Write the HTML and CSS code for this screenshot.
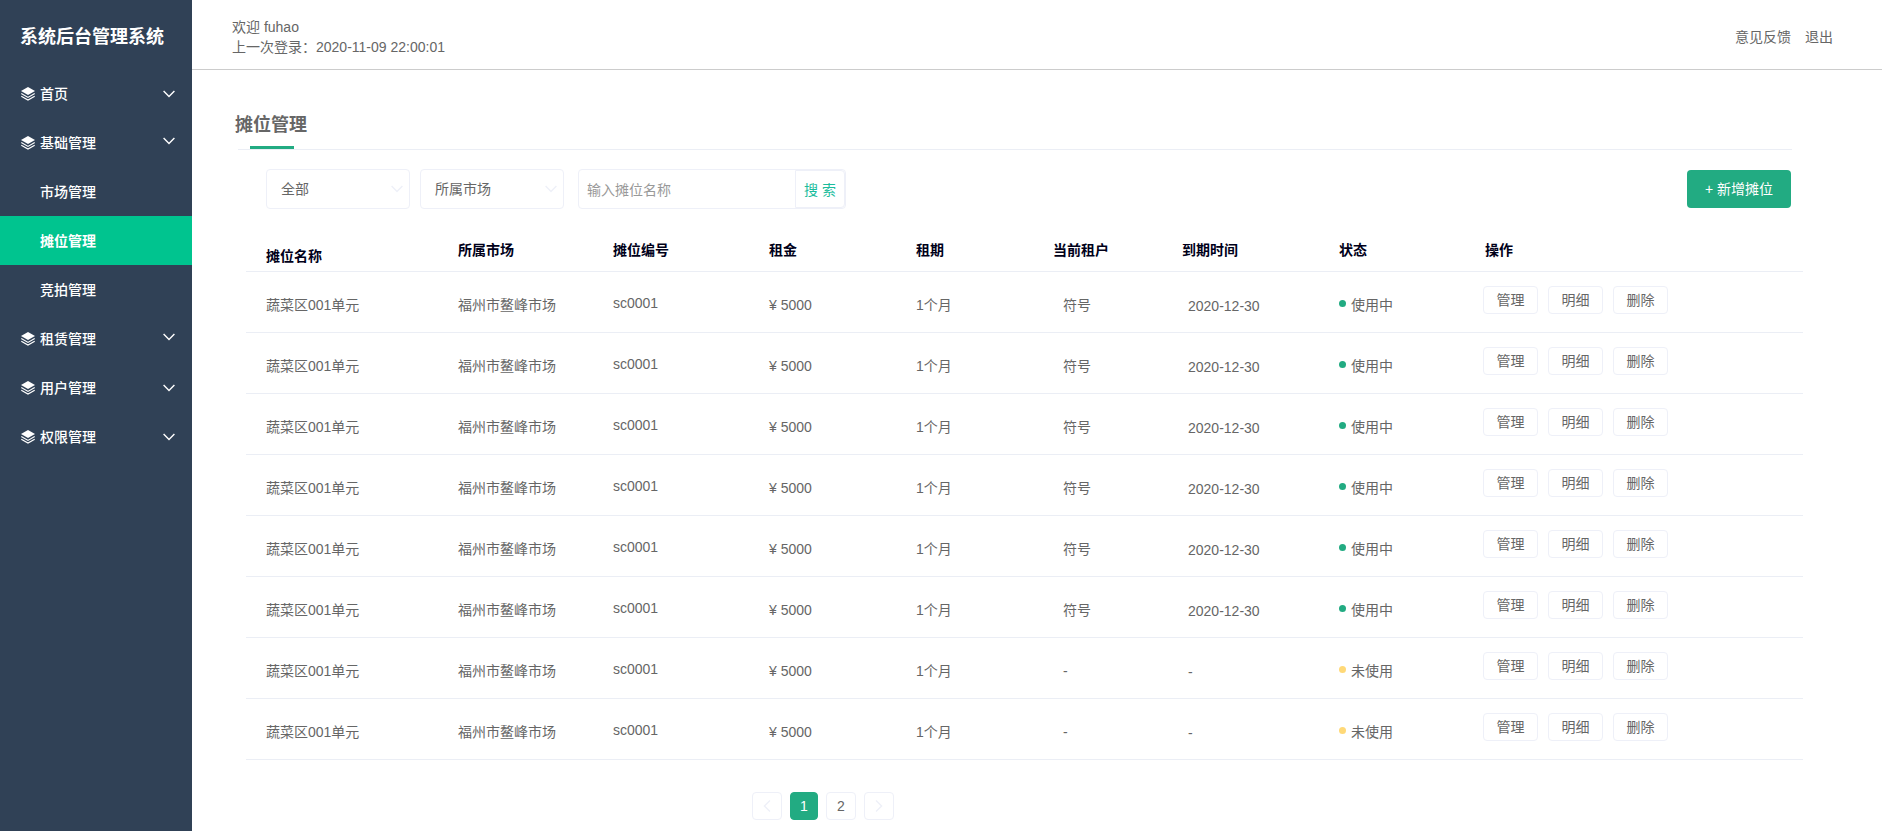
FILE: index.html
```html
<!DOCTYPE html>
<html lang="zh-CN">
<head>
<meta charset="utf-8">
<title>摊位管理</title>
<link rel="stylesheet" href="styles.css">
</head>
<body>
<svg class="sprite" aria-hidden="true">
  <symbol id="layers" viewBox="0 0 14 14">
    <path class="fill" d="M7 0 14 4 7 8 0 4Z"/>
    <path class="line thin" d="M0.3 6.6 7 10.4 13.7 6.6M0.3 9.3 7 13.1 13.7 9.3"/>
  </symbol>
  <symbol id="chevron" viewBox="0 0 12 8">
    <path class="line" d="M0.6 1 6 6.6 11.4 1"/>
  </symbol>
</svg>
<div class="app">
  <aside class="sidebar">
    <h1 class="brand">系统后台管理系统</h1>
    <nav class="menu">
      <a class="menu-item" href="#"><svg class="layers"><use href="#layers"/></svg>首页<svg class="chevron"><use href="#chevron"/></svg></a>
      <a class="menu-item" href="#"><svg class="layers"><use href="#layers"/></svg>基础管理<svg class="chevron raised"><use href="#chevron"/></svg></a>
      <a class="menu-item sub" href="#">市场管理</a>
      <a class="menu-item sub active" href="#">摊位管理</a>
      <a class="menu-item sub" href="#">竞拍管理</a>
      <a class="menu-item" href="#"><svg class="layers"><use href="#layers"/></svg>租赁管理<svg class="chevron raised"><use href="#chevron"/></svg></a>
      <a class="menu-item" href="#"><svg class="layers"><use href="#layers"/></svg>用户管理<svg class="chevron"><use href="#chevron"/></svg></a>
      <a class="menu-item" href="#"><svg class="layers"><use href="#layers"/></svg>权限管理<svg class="chevron"><use href="#chevron"/></svg></a>
    </nav>
  </aside>
  <div class="page">
    <header class="topbar">
      <p class="welcome">欢迎 fuhao<br>上一次登录：2020-11-09 22:00:01</p>
      <div class="links"><a href="#">意见反馈</a><a href="#">退出</a></div>
    </header>
    <main class="content">
      <div class="heading"><h2>摊位管理</h2><div class="tabline"></div></div>
      <form class="filters">
        <div class="picker"><select aria-label="状态"><option>全部</option></select><svg class="chevron"><use href="#chevron"/></svg></div>
        <div class="picker"><select aria-label="所属市场"><option>所属市场</option></select><svg class="chevron"><use href="#chevron"/></svg></div>
        <div class="search"><input type="text" aria-label="摊位名称" placeholder="输入摊位名称"><button type="button">搜 索</button></div>
        <button class="add" type="button">+ 新增摊位</button>
      </form>
      <table class="stalls">
        <colgroup><col class="w-name"><col class="w-market"><col class="w-code"><col class="w-rent"><col class="w-term"><col class="w-tenant"><col class="w-date"><col class="w-state"><col></colgroup>
        <thead><tr><th class="name">摊位名称</th><th>所属市场</th><th>摊位编号</th><th>租金</th><th>租期</th><th>当前租户</th><th>到期时间</th><th>状态</th><th class="ops">操作</th></tr></thead>
        <tbody id="rows"></tbody>
      </table>
      <nav class="pages" aria-label="分页">
        <button type="button" aria-label="上一页"><svg class="prev"><use href="#chevron"/></svg></button>
        <button type="button" class="current">1</button>
        <button type="button">2</button>
        <button type="button" aria-label="下一页"><svg class="next"><use href="#chevron"/></svg></button>
      </nav>
    </main>
  </div>
</div>
<script src="app.js"></script>
</body>
</html>
```
FILE: styles.css
```css
* { box-sizing: border-box; }
body {
  margin: 0;
  font: 14px/20px "Liberation Sans", "Noto Sans CJK SC", sans-serif;
  color: #666;
  background: #fff;
}
h1, h2, p { margin: 0; }
a { color: inherit; text-decoration: none; }
button, input, select { font: inherit; color: inherit; }
button { cursor: pointer; }
.sprite { position: absolute; width: 0; height: 0; }
.fill { fill: currentColor; }
.line { fill: none; stroke: currentColor; stroke-width: 1.4; }
.thin { stroke-width: 1.2; }
.chevron { width: 12px; height: 8px; }

.app { display: flex; min-height: 100vh; }
.sidebar { flex: 0 0 192px; background: #304156; color: #fff; }
.brand { height: 69px; padding: 5px 0 0 20px; font-size: 18px; line-height: 64px; white-space: nowrap; }
.menu-item { display: flex; align-items: center; height: 49px; padding: 0 17px 0 21px; font-weight: 500; }
.menu-item .layers { width: 14px; height: 14px; margin-right: 5px; }
.menu-item .chevron { margin-left: auto; }
.menu-item .raised { margin-bottom: 4px; }
.menu-item.sub { padding-left: 40px; }
.active { background: #00c48f; font-weight: 700; }

.page { flex: 1; min-width: 0; }
.topbar {
  display: flex;
  justify-content: space-between;
  align-items: center;
  height: 70px;
  padding: 4px 49px 0 40px;
  border-bottom: 1px solid #ccc;
}
.links { display: flex; gap: 14px; }

.content { padding: 38px 79px 10px 46px; }
.heading { margin-right: 11px; border-bottom: 1px solid #ebeef5; }
.heading h2 { margin-left: -3px; height: 38px; font-size: 18px; line-height: 34px; }
.tabline { width: 44px; height: 3px; margin-left: 12px; background: #22ab82; }

.filters { display: flex; align-items: center; padding: 19px 12px 0 28px; }
.picker { position: relative; width: 144px; height: 40px; margin-right: 10px; }
.picker select {
  appearance: none;
  width: 100%;
  height: 100%;
  padding: 0 14px;
  border: 1px solid #eef0f8;
  border-radius: 4px;
  background: #fff;
}
.picker .chevron { position: absolute; right: 7px; top: 16px; color: #eef0f8; pointer-events: none; }
.search {
  display: flex;
  width: 268px;
  height: 40px;
  margin-left: 4px;
  border: 1px solid #eef0f8;
  border-radius: 4px;
}
.search input { flex: 1; min-width: 0; padding: 2px 8px 0; border: 0; background: none; }
.search input::placeholder { color: #999; opacity: 1; }
.search button { width: 50px; padding: 2px 0 0; border: 1px solid #eef0f8; border-radius: 0 4px 4px 0; background: #fff; color: #1abc9c; }
.add { width: 104px; height: 38px; margin-left: auto; padding: 0; border: 0; border-radius: 4px; background: #22ab82; color: #fff; }

.stalls { width: calc(100% - 8px); margin-left: 8px; table-layout: fixed; border-collapse: separate; border-spacing: 0; }
.w-name { width: 212px; }
.w-market { width: 155px; }
.w-code { width: 156px; }
.w-rent { width: 147px; }
.w-term { width: 137px; }
.w-tenant { width: 129px; }
.w-date { width: 157px; }
.w-state { width: 144px; }
.stalls th, .stalls td { padding: 0; text-align: left; vertical-align: top; border-bottom: 1px solid #ebeef5; white-space: nowrap; }
.stalls th { height: 63px; padding-top: 31px; color: #000019; font-weight: 700; }
.stalls th.name { padding: 37px 0 0 20px; }
.stalls th.ops { padding-left: 2px; }
.stalls td { height: 61px; padding-top: 23px; }
.stalls td.name { padding-left: 20px; }
.stalls td.code { padding-top: 21px; }
.stalls td.tenant { padding-left: 10px; }
.stalls td.date { padding: 24px 0 0 6px; }
.stalls td.ops { padding-top: 14px; }
.dot { display: inline-block; width: 7px; height: 7px; margin-right: 5px; border-radius: 50%; background: #22ab82; vertical-align: 3px; }
.dot.idle { background: #ffd978; }
.buttons { display: flex; gap: 10px; }
.buttons button { width: 55px; height: 28px; padding: 0; border: 1px solid #eef0f8; border-radius: 4px; background: #fff; }

.pages { display: flex; gap: 8px; padding: 32px 0 0 514px; }
.pages button { display: grid; place-items: center; width: 30px; height: 28px; padding: 0; border: 1px solid #eef0f8; border-radius: 4px; background: #fff; }
.pages .current { width: 28px; border-color: #22ab82; background: #22ab82; color: #fff; }
.pages svg { width: 12px; height: 8px; color: #eef0f8; }
.prev { transform: rotate(90deg); }
.next { transform: rotate(-90deg); }
```
FILE: app.js
```js
const rows = [];
for (let i = 0; i < 8; i++) {
  const used = i < 6;
  rows.push({ tenant: used ? '符号' : '-', date: used ? '2020-12-30' : '-', state: used ? '使用中' : '未使用', used });
}
document.getElementById('rows').innerHTML = rows.map(r => `
  <tr>
    <td class="name">蔬菜区001单元</td><td>福州市鳌峰市场</td><td class="code">sc0001</td><td>¥ 5000</td><td>1个月</td>
    <td class="tenant">${r.tenant}</td><td class="date">${r.date}</td>
    <td><span class="dot ${r.used ? '' : 'idle'}"></span>${r.state}</td>
    <td class="ops"><div class="buttons"><button type="button">管理</button><button type="button">明细</button><button type="button">删除</button></div></td>
  </tr>`).join('');
```
